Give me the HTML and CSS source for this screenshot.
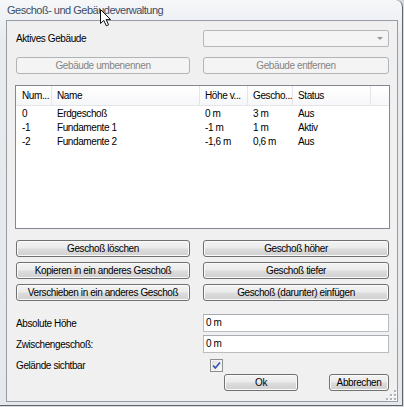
FILE: index.html
```html
<!DOCTYPE html>
<html>
<head>
<meta charset="utf-8">
<link rel="stylesheet" href="styles.css">
</head>
<body>
<div class="window">
  <div class="titlebar"><span class="title">Geschoß- und Gebäudeverwaltung</span></div>
  <div class="client">
    <div class="pair top">
      <div class="label">Aktives Gebäude</div>
      <div class="combo"><span class="arrow"></span></div>
    </div>
    <div class="pair gap10">
      <button class="btn disabled">Gebäude umbenennen</button>
      <button class="btn disabled">Gebäude entfernen</button>
    </div>
    <div class="list">
      <div class="lhead">
        <div class="c c1">Num...</div>
        <div class="c c2">Name</div>
        <div class="c c3">Höhe v...</div>
        <div class="c c4">Gescho...</div>
        <div class="c c5">Status</div>
        <div class="c cf"></div>
      </div>
      <div class="lrow first">
        <div class="c c1">0</div><div class="c c2">Erdgeschoß</div><div class="c c3">0 m</div><div class="c c4">3 m</div><div class="c c5">Aus</div>
      </div>
      <div class="lrow">
        <div class="c c1">-1</div><div class="c c2">Fundamente 1</div><div class="c c3">-1 m</div><div class="c c4">1 m</div><div class="c c5">Aktiv</div>
      </div>
      <div class="lrow">
        <div class="c c1">-2</div><div class="c c2">Fundamente 2</div><div class="c c3">-1,6 m</div><div class="c c4">0,6 m</div><div class="c c5">Aus</div>
      </div>
    </div>
    <div class="btngrid">
      <button class="btn">Geschoß löschen</button>
      <button class="btn">Geschoß höher</button>
      <button class="btn">Kopieren in ein anderes Geschoß</button>
      <button class="btn">Geschoß tiefer</button>
      <button class="btn">Verschieben in ein anderes Geschoß</button>
      <button class="btn">Geschoß (darunter) einfügen</button>
    </div>
    <div class="pair field first-field">
      <div class="label">Absolute Höhe</div>
      <div class="input">0 m</div>
    </div>
    <div class="pair field second-field">
      <div class="label">Zwischengeschoß:</div>
      <div class="input">0 m</div>
    </div>
    <div class="pair checkrow">
      <div class="label">Gelände sichtbar</div>
      <div class="checkcell">
        <span class="checkbox">
          <svg width="9" height="9" viewBox="0 0 9 9"><path d="M1 4.5 L3.3 7 L8 1.5" fill="none" stroke="#3b56b0" stroke-width="1.7"/></svg>
        </span>
      </div>
    </div>
    <div class="pair actions">
      <div></div>
      <div class="actioncell">
        <button class="btn ok">Ok</button>
        <button class="btn cancel">Abbrechen</button>
      </div>
    </div>
    <svg class="grip" width="12" height="12" viewBox="0 0 12 12">
      <g fill="#fff"><rect x="10" y="2" width="2" height="2"/><rect x="10" y="6" width="2" height="2"/><rect x="6" y="6" width="2" height="2"/><rect x="10" y="10" width="2" height="2"/><rect x="6" y="10" width="2" height="2"/><rect x="2" y="10" width="2" height="2"/></g>
      <g fill="#b0b3b8"><rect x="9" y="1" width="2" height="2"/><rect x="9" y="5" width="2" height="2"/><rect x="5" y="5" width="2" height="2"/><rect x="9" y="9" width="2" height="2"/><rect x="5" y="9" width="2" height="2"/><rect x="1" y="9" width="2" height="2"/></g>
    </svg>
  </div>
  <svg class="cursor" width="13" height="18" viewBox="0 0 13 18">
    <path d="M0.5 0.5 V14.5 L3.8 11.4 L6.3 16.8 L8.6 15.8 L6.1 10.6 H10.6 Z" fill="#fff" stroke="#111" stroke-width="1"/>
  </svg>
</div>
</body>
</html>
```

FILE: styles.css
```css
* { box-sizing: border-box; }
html, body { margin: 0; padding: 0; }
body {
  width: 404px;
  height: 407px;
  overflow: hidden;
  background: #d6d9de;
  font-family: "Liberation Sans", Arial, sans-serif;
  font-size: 10px;
  letter-spacing: -0.4px;
  color: #000;
}
.window {
  position: relative;
  width: 403px;
  height: 406px;
  border-right: 1px solid #61656b;
  border-bottom: 1px solid #61656b;
  border-top-right-radius: 7px;
  background: linear-gradient(#f5f7f9, #e8ebee 40px, #e5e8ec);
  display: flex;
  flex-direction: column;
}
.titlebar {
  height: 20px;
  padding-left: 7px;
  display: flex;
  align-items: center;
}
.title {
  font-size: 11px;
  letter-spacing: -0.5px;
  color: #3d4c63;
}
.client {
  position: relative;
  margin: 0 4px 3px 6px;
  height: 382px;
  border: 1px solid #969ca4;
  background: #f0f0f0;
  padding: 9px 8px 0 9px;
  display: flex;
  flex-direction: column;
}
.pair {
  display: grid;
  grid-template-columns: 174px 186px;
  column-gap: 13px;
  align-items: center;
}
.combo {
  position: relative;
  height: 17px;
  border: 1px solid #b4b7ba;
  border-radius: 2px;
  background: #f4f4f4;
}
.arrow {
  position: absolute;
  right: 5px;
  top: 6px;
  width: 0;
  height: 0;
  border-left: 3px solid transparent;
  border-right: 3px solid transparent;
  border-top: 3px solid #9a9a9a;
}
.gap10 { margin-top: 10px; }
.btn {
  font: inherit;
  letter-spacing: inherit;
  height: 17px;
  padding: 0;
  margin: 0;
  border: 1px solid #707070;
  border-radius: 3px;
  background: linear-gradient(#f3f3f3 0%, #ebebeb 48%, #dddddd 52%, #d0d0d0 100%);
  box-shadow: inset 0 0 0 1px #fbfbfb;
  color: #000;
  text-align: center;
  line-height: 15px;
  white-space: nowrap;
}
.btn.disabled {
  border-color: #b0b4b7;
  background: #f4f4f4;
  box-shadow: none;
  color: #848484;
}
.list {
  margin: 11px -1px 0 -1px;
  height: 144px;
  border: 1px solid #828790;
  background: #fff;
}
.lhead {
  display: flex;
  height: 20px;
  border-bottom: 1px solid #e3e5e8;
  background: linear-gradient(#ffffff, #f6f7f9);
}
.lhead .c {
  border-right: 1px solid #e3e5e8;
}
.c {
  padding-left: 5px;
  display: flex;
  align-items: center;
  white-space: nowrap;
  overflow: hidden;
}
.c1 { width: 36px; padding-left: 6px; }
.c2 { width: 148px; }
.c3 { width: 48px; }
.c4 { width: 45px; }
.c5 { width: 78px; }
.cf { flex: 1; }
.lhead .cf { border-right: none; }
.lrow {
  display: flex;
  height: 14px;
}
.btngrid {
  margin-top: 11px;
  display: grid;
  grid-template-columns: 174px 186px;
  column-gap: 13px;
  row-gap: 5px;
}
.field .input {
  height: 18px;
  border: 1px solid #b9bdc2;
  border-top-color: #a9adb3;
  background: #fff;
  padding-left: 2px;
  line-height: 16px;
}
.first-field { margin-top: 13px; }
.second-field { margin-top: 3px; }
.checkrow { margin-top: 6px; height: 13px; }
.checkcell { display: flex; padding-left: 7px; }
.checkbox {
  width: 13px;
  height: 13px;
  border: 1px solid #8e8f8f;
  background: linear-gradient(135deg, #dcdcdc, #fdfdfd);
  box-shadow: inset 0 0 0 1px #f4f4f4;
  display: flex;
  align-items: center;
  justify-content: center;
}
.actions { margin-top: 2px; }
.actioncell {
  display: flex;
  justify-content: flex-end;
  gap: 31px;
}
.ok { width: 74px; }
.cancel { width: 60px; }
.grip {
  position: absolute;
  right: 0;
  bottom: 0;
}
.cursor {
  position: absolute;
  left: 100px;
  top: 9px;
}
```
